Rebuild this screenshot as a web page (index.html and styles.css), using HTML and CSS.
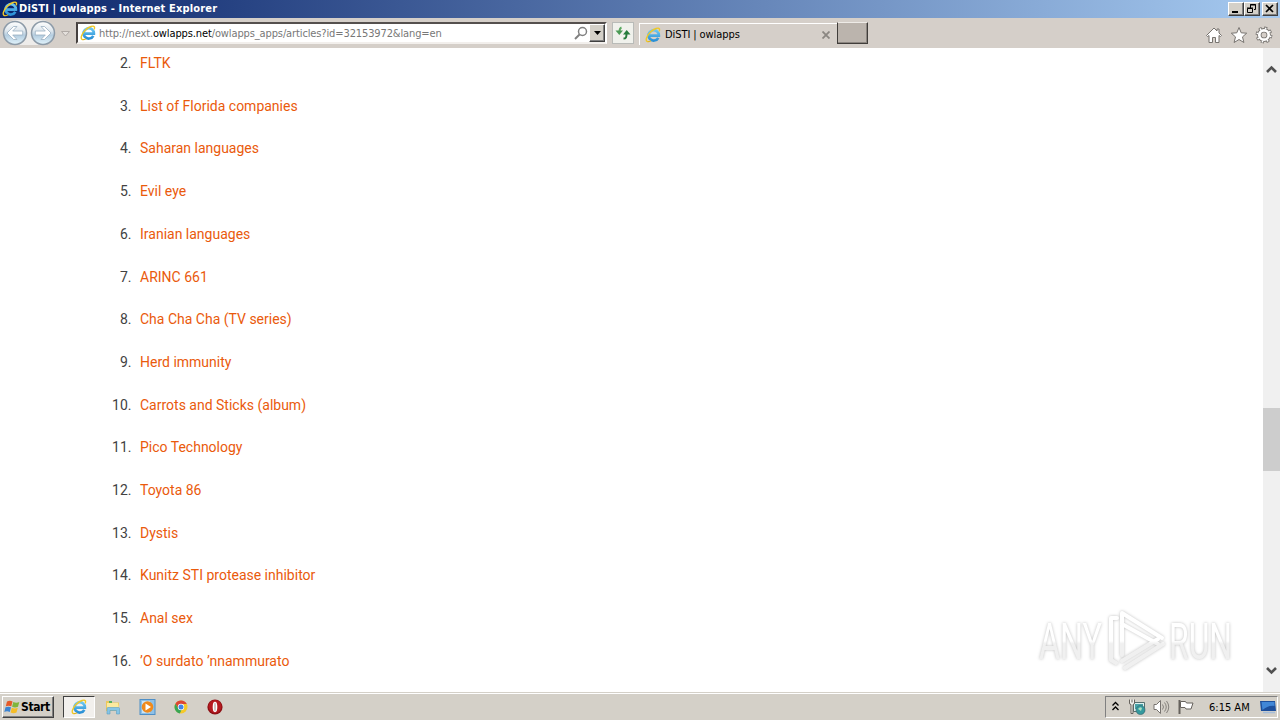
FILE: index.html
```
<!DOCTYPE html>
<html lang="en">
<head>
<meta charset="utf-8">
<title>DiSTI | owlapps</title>
<link rel="stylesheet" href="styles.css">
</head>

<body>
<svg class="defs" width="0" height="0">
  <defs>
    <linearGradient id="ie-blue" x1="0" y1="0" x2="0" y2="1">
      <stop offset="0" stop-color="#6cc8f2"/>
      <stop offset="1" stop-color="#2a90d6"/>
    </linearGradient>
    <linearGradient id="ball" x1="0" y1="0" x2="0" y2="1">
      <stop offset="0" stop-color="#ffffff"/>
      <stop offset="0.4" stop-color="#dfe7ed"/>
      <stop offset="0.6" stop-color="#b4cde0"/>
      <stop offset="1" stop-color="#e2f4fc"/>
    </linearGradient>
    <linearGradient id="mark" gradientUnits="userSpaceOnUse" x1="0" y1="0" x2="0" y2="66">
      <stop offset="0.5" stop-color="#fff"/>
      <stop offset="0.54" stop-color="#f0f0f0"/>
    </linearGradient>
    <symbol id="ie" viewBox="0 0 16 16">
      <path d="M13.300 10.800A5.200 5.200 0 1 1 13.900 8.700H5" fill="none" stroke="url(#ie-blue)" stroke-width="2.700"/>
      <path d="M3 14.600C-.2 14.600 1.200 9.400 5 5.500C9 1.500 13.900.1 14.500 2C14.700 2.800 14.500 3.600 14.100 4.400" fill="none" stroke="#f0c828" stroke-width="1.400"/>
      <path d="M2.800 14.600C3.800 14.700 5 14.300 6 13.700" fill="none" stroke="#e0b420" stroke-width="1.100"/>
    </symbol>
  </defs>
</svg>

<div class="titlebar">
  <svg class="title-icon" width="16" height="16"><use href="#ie"/></svg>
  <span class="title-text">DiSTI | owlapps - Internet Explorer</span>
  <div class="window-buttons">
    <span class="win-btn"><svg width="14" height="12"><path d="M3 9h6" stroke="#000" stroke-width="2"/></svg></span>
    <span class="win-btn"><svg width="14" height="12"><path d="M5.500 5V1.500h5v5H9M5 2h6M2.500 5.500h5v4h-5zM2 5h6" fill="none" stroke="#000"/></svg></span>
    <span class="win-btn close"><svg width="14" height="12"><path d="M3 2l7 7M10 2l-7 7" stroke="#000" stroke-width="1.700"/></svg></span>
  </div>
</div>

<div class="toolbar">
  <svg class="nav" width="74" height="30" viewBox="0 0 74 30">
    <rect x="4" y="2" width="50" height="25" rx="12" fill="#eeecea"/>
    <circle cx="15" cy="15" r="11.500" fill="url(#ball)" stroke="#8d9ba8" stroke-width="1.500"/>
    <circle cx="43" cy="15" r="11.500" fill="url(#ball)" stroke="#8d9ba8" stroke-width="1.500"/>
    <path d="M7 15l6.500-6.500h3.500l-4.300 4.500h10v4h-10l4.300 4.500h-3.500z" fill="#fff" stroke="#9bb0c2" stroke-width=".8"/>
    <path d="M51 15l-6.500-6.500h-3.500l4.300 4.500h-10v4h10l-4.300 4.500h3.500z" fill="#fff" stroke="#9bb0c2" stroke-width=".8"/>
    <path d="M61.500 13.500h8l-4 4.500z" fill="#e4e0dc" stroke="#b0aaa6"/>
  </svg>
  <div class="address">
    <svg width="16" height="16"><use href="#ie"/></svg>
    <span class="url">http://next.<b>owlapps.net</b>/owlapps_apps/articles?id=32153972&amp;lang=en</span>
    <svg class="search" width="14" height="15" viewBox="0 0 14 15"><circle cx="8.500" cy="5.500" r="4" fill="none" stroke="#808080" stroke-width="1.500"/><path d="M5.500 8.500L1 13" stroke="#808080" stroke-width="2"/></svg>
    <span class="drop"><svg width="9" height="5"><path d="M1 0h7L4.500 4z"/></svg></span>
  </div>
  <div class="refresh">
    <svg width="16" height="16" viewBox="0 0 16 16"><path d="M6.500 2.500C5 3 4.500 4 4.500 7" fill="none" stroke="#5aa860" stroke-width="2"/><path d="M.5 5.500h7.500l-3.700 4.500z" fill="#4b9a55"/><path d="M8.500 13.500c2.500 0 3-1 3-5" fill="none" stroke="#267c3c" stroke-width="2"/><path d="M8 9.500h7.500L11.700 5z" fill="#267c3c"/></svg>
  </div>
  <div class="tab">
    <svg width="16" height="16"><use href="#ie"/></svg>
    <span class="tab-text">DiSTI | owlapps</span>
    <svg class="tab-close" width="8" height="8"><path d="M.5.500l7 7M7.500.500l-7 7" stroke="#8b8782" stroke-width="1.800"/></svg>
  </div>
  <div class="new-tab"></div>
  <div class="tools">
    <svg width="18" height="18" viewBox="0 0 18 18"><path d="M1.500 9.500L9 2l3 3V3h2v4l2.500 2.500-1 1-1.500-1v7h-3.500v-5h-3v5H4v-7l-1.500 1z" fill="#fff" stroke="#77736f"/></svg>
    <svg width="18" height="18" viewBox="0 0 18 18"><path d="M9 1.500l2.200 5.300 5.500.4-4.200 3.700 1.400 5.600L9 13.500l-4.900 3 1.400-5.600-4.200-3.700 5.500-.4z" fill="#fff" stroke="#77736f"/></svg>
    <svg width="18" height="18" viewBox="0 0 18 18"><g fill="none"><circle cx="9" cy="9" r="6.700" stroke="#77736f" stroke-width="3.400" stroke-dasharray="2.900 2.362"/><circle cx="9" cy="9" r="4.700" stroke="#77736f" stroke-width="4.400"/><circle cx="9" cy="9" r="6.700" stroke="#fff" stroke-width="1.800" stroke-dasharray="1.500 3.762" stroke-dashoffset="-.7"/><circle cx="9" cy="9" r="4.700" stroke="#fff" stroke-width="2.700"/></g></svg>
  </div>
</div>

<div class="viewport">
  <ol class="articles" start="2">
    <li><a>FLTK</a></li>
    <li><a>List of Florida companies</a></li>
    <li><a>Saharan languages</a></li>
    <li><a>Evil eye</a></li>
    <li><a>Iranian languages</a></li>
    <li><a>ARINC 661</a></li>
    <li><a>Cha Cha Cha (TV series)</a></li>
    <li><a>Herd immunity</a></li>
    <li><a>Carrots and Sticks (album)</a></li>
    <li><a>Pico Technology</a></li>
    <li><a>Toyota 86</a></li>
    <li><a>Dystis</a></li>
    <li><a>Kunitz STI protease inhibitor</a></li>
    <li><a>Anal sex</a></li>
    <li><a>’O surdato ’nnammurato</a></li>
  </ol>
  <div class="scrollbar">
    <svg width="17" height="12"><path d="M4 9l4.500-4.500L13 9" fill="none" stroke="#505050" stroke-width="2.600"/></svg>
    <div class="thumb"></div>
    <svg class="down" width="17" height="12"><path d="M4 3l4.500 4.500L13 3" fill="none" stroke="#505050" stroke-width="2.600"/></svg>
  </div>
  <svg class="watermark" width="200" height="66" viewBox="0 0 200 66">
    <text x="1" y="51" textLength="63" lengthAdjust="spacingAndGlyphs" fill="url(#mark)">ANY</text>
    <g fill="none" stroke="url(#mark)" stroke-width="4" stroke-linejoin="round" stroke-linecap="round">
      <path d="M84 47V5l40 25M84 16l36 20"/>
      <path d="M79 10h-6v42l5 3"/>
      <path d="M84 53l36-22M87 60l38-24"/>
    </g>
    <text x="131" y="51" textLength="63" lengthAdjust="spacingAndGlyphs" fill="url(#mark)">RUN</text>
  </svg>
</div>

<div class="taskbar">
  <div class="start">
    <svg width="17" height="16" viewBox="0 0 17 16"><path d="M3 2.500q3-1.700 5.500 0L7.300 7.300Q4.500 6 1.800 7.300z" fill="#e65a28"/><path d="M9.300 3q3 1.500 6 0L14 7.800q-3 1.400-5.900 0z" fill="#80b53c"/><path d="M1.500 8.300q3-1.300 5.500 0L5.800 13Q3 11.700.3 13z" fill="#3c84d2"/><path d="M7.800 8.800q3 1.400 6 0l-1.300 4.700q-3 1.400-5.900 0z" fill="#f5bd28"/></svg>
    <span class="start-text">Start</span>
  </div>
  <div class="task-active"><svg width="16" height="16"><use href="#ie"/></svg></div>
  <svg class="task" width="16" height="16" viewBox="0 0 16 16"><path d="M1 2h5l1 1.500h7V12H1z" fill="#ecc95c"/><path d="M2 4h11l1 6H2z" fill="#fbeaa0"/><path d="M4 2h3v2H4z" fill="#57b060"/><path d="M2 15V9.500q0-1 1-1h10.500q1 0 1 1V15h-3v-3.500H5V15z" fill="#86c5e6" stroke="#5a9fc4" stroke-width=".6"/></svg>
  <svg class="task" width="17" height="16" viewBox="0 0 17 16"><rect x="1" y=".5" width="15" height="15" fill="#8fc1e7" stroke="#4f8fc6"/><rect x="3" y="2" width="8" height="12" fill="#cbe4f5"/><circle cx="8.500" cy="8" r="5.800" fill="#f08a1c"/><path d="M6.500 4.500v7l5.500-3.500z" fill="#fff"/></svg>
  <svg class="task" width="16" height="16" viewBox="0 0 16 16"><circle cx="8" cy="8" r="6.500" fill="#f5c928"/><path d="M2.400 4.700A6.500 6.500 0 0 1 13.800 5H8L5.300 9.500z" fill="#dc4634"/><path d="M2.400 4.700L5.400 9.600 8.500 11l-1.700 3.400A6.500 6.500 0 0 1 2.400 4.700z" fill="#39a555"/><circle cx="8" cy="8" r="3.200" fill="#fff"/><circle cx="8" cy="8" r="2.500" fill="#4384e6"/></svg>
  <svg class="task" width="16" height="16" viewBox="0 0 16 16"><circle cx="8" cy="8" r="7.600" fill="#8e0f14"/><circle cx="8" cy="7.500" r="6.500" fill="#b51a20"/><ellipse cx="8" cy="8" rx="2.300" ry="5.200" fill="#fff"/><ellipse cx="8" cy="8" rx="1" ry="4.400" fill="#cfc4c2"/></svg>
  <div class="tray">
    <svg width="9" height="12"><path d="M1.500 4.500l3-3 3 3M1.500 9l3-3 3 3" fill="none" stroke="#000" stroke-width="1.300"/></svg>
    <svg class="tray-net" width="17" height="16" viewBox="0 0 17 16"><path d="M4.500 3.500h11v9h-11z" fill="#dff0ee" stroke="#56706f"/><path d="M6 5h8v5H6z" fill="#49a3a8"/><circle cx="11.500" cy="11" r="4.500" fill="#349a9e" stroke="#3c6c72" stroke-width=".7"/><path d="M9 10q2-3 4-1l-1 3z" fill="#a9ddc0"/><path d="M.5.500v3.500q0 1.500 1.500 1.500v9h2V5.500q1.500 0 1.500-1.500V.5M3 .5v3" fill="#f4f2ee" stroke="#66625d"/></svg>
    <svg class="tray-sound" width="17" height="16" viewBox="0 0 17 16"><path d="M1 5.500h2.500L7.500 1.500v13l-4-4H1z" fill="#fff" stroke="#77736f"/><path d="M9.500 5.500q2 2.500 0 5M11.500 3.500q3.500 4.500 0 9M13.500 2q4.500 6 0 12" fill="none" stroke="#85817c"/></svg>
    <svg class="tray-flag" width="18" height="16" viewBox="0 0 18 16"><path d="M2.500 1v14" stroke="#66625d" stroke-width="2"/><path d="M3.500 2.500h5l1 1.500h6.500l-2 6H9l-1-1.500H3.500z" fill="#fff" stroke="#66625d"/></svg>
    <span class="clock">6:15 AM</span>
    <svg class="tray-desk" width="16" height="14" viewBox="0 0 16 14"><path d="M0 1h15l1 10H1z" fill="#1d4f9c"/><path d="M1.500 2h13v4q-6-1-12 4z" fill="#4187d7"/><path d="M3 12.500h12" stroke="#a5bdd9" stroke-width="1.500"/></svg>
  </div>
</div>
</body>
</html>
```
FILE: styles.css
```
html, body { margin: 0; padding: 0; }
body { width: 1280px; height: 720px; overflow: hidden; display: flex; flex-direction: column; background: #fff; color: #000; font-family: "DejaVu Sans Condensed", "DejaVu Sans", sans-serif; font-size: 11px; }
svg { display: block; flex: none; }
.defs { position: absolute; }

.titlebar { height: 18px; display: flex; align-items: center; box-sizing: border-box; padding: 0 2px; background: linear-gradient(to right, #0a246a, #a6caf0); color: #fff; }
.title-text { margin-left: 1px; font-weight: bold; font-size: 11px; line-height: 18px; letter-spacing: 0.16px; white-space: nowrap; }
.window-buttons { display: flex; margin-left: auto; }
.win-btn { width: 16px; height: 14px; box-sizing: border-box; background: #d4d0c8; border: 1px solid; border-color: #fff #404040 #404040 #fff; box-shadow: inset -1px -1px #808080; }
.win-btn.close { margin-left: 2px; }

.toolbar { height: 30px; display: flex; background: #d5cfc9; }
.address { width: 531px; height: 22px; margin: 4px 0 0 2px; box-sizing: border-box; display: flex; align-items: center; padding: 0 0 0 2px; background: #fff; border: 2px solid; border-color: #55504e #fff #f2efec #45403f; }
.url { margin-left: 3px; line-height: 18px; padding-top: 2px; color: #777; white-space: nowrap; letter-spacing: -0.12px; }
.url b { font-weight: normal; color: #000; }
.search { margin-left: auto; }
.drop { width: 16px; height: 18px; margin-left: 1px; box-sizing: border-box; display: flex; align-items: center; justify-content: center; background: #d4d0c8; border: 1px solid; border-color: #fff #404040 #404040 #fff; box-shadow: inset -1px -1px #808080; }
.refresh { width: 22px; height: 22px; margin: 4px 0 0 5px; box-sizing: border-box; padding: 2px; background: #f0f1ec; border: 1px solid #b9bbb8; }
.tab { width: 198px; height: 22px; margin: 5px 0 0 5px; box-sizing: border-box; display: flex; align-items: center; padding: 0 7px 0 5px; border-top: 1px solid #fff; border-left: 1px solid #fff; }
.tab-text { margin-left: 4px; line-height: 20px; white-space: nowrap; letter-spacing: -0.08px; }
.tab-close { margin-left: auto; }
.new-tab { width: 31px; height: 22px; margin-top: 4px; box-sizing: border-box; background: #bbb4ad; border: 1px solid; border-color: #eeebe7 #403d3a #403d3a #403d3a; box-shadow: inset -1px -1px #8b8580; }
.tools { display: flex; gap: 7px; margin: 8px 7px 0 auto; }

.viewport { position: relative; height: 644px; overflow: hidden; display: flex; justify-content: space-between; background: #fff; }
.articles { margin: 4px 0 0 135px; padding: 0; font: 14px/22px Roboto, sans-serif; color: #424242; }
.articles li { height: 42.71px; padding-left: 5px; }
.articles a { color: #ea5a0c; }
.scrollbar { width: 17px; display: flex; flex-direction: column; box-sizing: border-box; padding: 15px 0; background: #f0f0f0; }
.thumb { height: 63px; margin-top: 333px; background: #cdcdcd; }
.down { margin-top: auto; }

.watermark { position: absolute; left: 1038px; top: 560px; overflow: visible; font-family: Roboto, sans-serif; font-size: 50px; filter: drop-shadow(0 0 1.5px rgba(0, 0, 0, 0.25)); }

.taskbar { height: 28px; box-sizing: border-box; display: flex; align-items: flex-start; padding: 4px 2px 0; background: #d4d0c8; box-shadow: inset 0 1px #d4d0c8, inset 0 2px #fff; }
.start { width: 52px; height: 22px; box-sizing: border-box; display: flex; align-items: center; padding-left: 1px; border: 1px solid; border-color: #fff #404040 #404040 #fff; box-shadow: inset -1px -1px #808080; }
.start-text { font-weight: bold; font-size: 12px; line-height: 20px; letter-spacing: -0.4px; }
.task-active { width: 32px; height: 22px; box-sizing: border-box; margin-left: 9px; padding: 2px 0 0 7px; background: #f2f0ed; border: 1px solid; border-color: #404040 #fff #fff #404040; }
.task { margin: 3px 0 0 10px; }
.task + .task { margin-left: 17.5px; }
.tray { width: 173px; height: 22px; margin-left: auto; box-sizing: border-box; display: flex; align-items: center; padding-left: 5px; border: 1px solid; border-color: #808080 #fff #fff #808080; }
.tray-net { margin-left: 9px; }
.tray-sound { margin-left: 7px; }
.tray-flag { margin-left: 7px; }
.clock { margin-left: 14px; line-height: 20px; padding-top: 1px; white-space: nowrap; }
.tray-desk { margin: 0 1px 0 auto; }
```
